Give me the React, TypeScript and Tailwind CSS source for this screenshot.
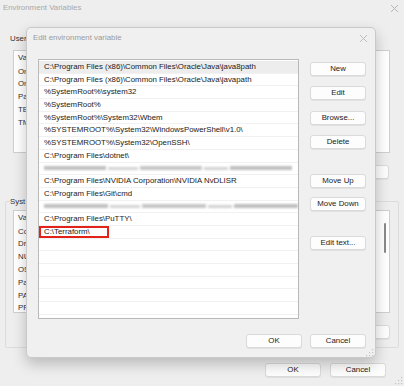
import React from 'react';

const FONT = { fontFamily: '"Liberation Sans", Arial, sans-serif' };

const PATHS: (string | null)[] = [
  'C:\\Program Files (x86)\\Common Files\\Oracle\\Java\\java8path',
  'C:\\Program Files (x86)\\Common Files\\Oracle\\Java\\javapath',
  '%SystemRoot%\\system32',
  '%SystemRoot%',
  '%SystemRoot%\\System32\\Wbem',
  '%SYSTEMROOT%\\System32\\WindowsPowerShell\\v1.0\\',
  '%SYSTEMROOT%\\System32\\OpenSSH\\',
  'C:\\Program Files\\dotnet\\',
  null,
  'C:\\Program Files\\NVIDIA Corporation\\NVIDIA NvDLISR',
  'C:\\Program Files\\Git\\cmd',
  null,
  'C:\\Program Files\\PuTTY\\',
  'C:\\Terraform\\',
  '', '', '', '', '', '',
];

// back window columns are mostly hidden by the dialog, only the first letters show
const USER_VARS = ['On', 'On', 'Pa', 'TE', 'TM'];
const SYS_VARS = ['Co', 'Dr', 'NU', 'OS', 'Pa', 'PA', 'PR'];

const CloseIcon = ({ color = '#b5b5b5' }: { color?: string }) => (
  <svg width="9" height="9" viewBox="0 0 9 9">
    <path d="M1 1L8 8M8 1L1 8" stroke={color} strokeWidth="1" />
  </svg>
);

const Grip = () => (
  <svg width="8" height="8" viewBox="0 0 8 8">
    <rect x="6" y="0" width="1.2" height="1.2" fill="#c4c4c4" />
    <rect x="3" y="3" width="1.2" height="1.2" fill="#c4c4c4" />
    <rect x="6" y="3" width="1.2" height="1.2" fill="#c4c4c4" />
    <rect x="0" y="6" width="1.2" height="1.2" fill="#c4c4c4" />
    <rect x="3" y="6" width="1.2" height="1.2" fill="#c4c4c4" />
    <rect x="6" y="6" width="1.2" height="1.2" fill="#c4c4c4" />
  </svg>
);

const Btn = ({ label, className = '' }: { label?: string; className?: string }) => (
  <div className={`h-[14px] w-[56px] flex items-center justify-center rounded-[3px] bg-[#fdfdfd] border border-[#dadada] shadow-[0_1px_0_rgba(0,0,0,0.06)] text-[7.85px] text-[#1b1b1b] leading-none ${className}`}>
    {label}
  </div>
);

const Blur = ({ w }: { w: number }) => (
  <div className="flex items-center gap-[2px] blur-[1px]" style={{ width: w }}>
    <div className="h-[4px] flex-1 bg-[#c0c0c0]" />
    <div className="h-[3px] w-[30px] bg-[#d4d4d4]" />
    <div className="h-[4px] flex-1 bg-[#c6c6c6]" />
    <div className="h-[3px] w-[24px] bg-[#d2d2d2]" />
    <div className="h-[4px] flex-1 bg-[#bfbfbf]" />
  </div>
);

const BackList = ({ rows }: { rows: string[] }) => (
  <div className="ml-[3px] h-[103px] bg-white border border-[#cfcfcf] overflow-hidden">
    <div className="h-[14px] flex items-center pl-[4px] text-[7.85px] text-[#333]">Va</div>
    {rows.map((r, i) => (
      <div key={i} className="h-[12.8px] flex items-center pl-[4px] text-[7.85px] text-[#333]">{r}</div>
    ))}
  </div>
);

const EditDialog = () => (
  <div className="absolute left-[26px] top-[27px] w-[350px] h-[331px] bg-[#f0f0f0] border border-[#c9c9c9] rounded-[5px] shadow-[0_6px_14px_rgba(0,0,0,0.22)] flex flex-col">
    <div className="h-[18px] mt-[1px] flex items-center justify-between pl-[6px] pr-[7px]">
      <span className="text-[7.85px] text-[#9b9b9b]">Edit environment variable</span>
      <CloseIcon color="#bdbdbd" />
    </div>
    <div className="flex mt-[12px] pl-[11px] gap-[11px]">
      <div className="w-[261px] h-[260px] bg-white border border-[#b9b9b9] flex flex-col">
        <div className="h-[1px]" />
        {PATHS.map((p, i) => (
          <div
            key={i}
            className={`relative h-[12.7px] shrink-0 flex items-center pl-[5px] border-b border-[#f1f1f1] text-[7.85px] text-[#1a1a1a] whitespace-nowrap ${i === 0 ? 'bg-[#ededed]' : ''}`}
          >
            {p === null ? <Blur w={i === 8 ? 248 : 255} /> : p}
            {i === 13 && <div className="absolute left-0 top-[0.5px] w-[70px] h-[12px] border-2 border-[#e2231a]" />}
          </div>
        ))}
      </div>
      <div className="flex flex-col">
        <Btn label="New" className="mt-[3px]" />
        <Btn label="Edit" className="mt-[10px]" />
        <Btn label="Browse..." className="mt-[11px]" />
        <Btn label="Delete" className="mt-[10px]" />
        <Btn label="Move Up" className="mt-[25px]" />
        <Btn label="Move Down" className="mt-[9px]" />
        <Btn label="Edit text..." className="mt-[25px]" />
      </div>
    </div>
    <div className="flex justify-end gap-[8px] pr-[9px] mt-[15px]">
      <Btn label="OK" />
      <Btn label="Cancel" />
    </div>
    <div className="flex justify-end pr-[1px] mt-[1px]">
      <Grip />
    </div>
  </div>
);

export default function App() {
  return (
    <div className="relative w-[404px] h-[386px] overflow-hidden bg-[#eeeeee]" style={FONT}>
      <div className="h-[16px] flex items-center justify-between pl-[3px] pr-[5px]">
        <span className="text-[7.85px] text-[#a9a9a9]">Environment Variables</span>
        <CloseIcon />
      </div>
      <div className="pl-[10px] pr-[14px]">
        <div className="mt-[18px] h-[10px] flex items-center text-[7.85px] text-[#333]">User</div>
        <div className="mt-[6px]">
          <BackList rows={USER_VARS} />
        </div>
        <div className="flex justify-end gap-[9px] mt-[12px]">
          <Btn />
          <Btn />
          <Btn className="mr-[1px]" />
        </div>
      </div>
      <div className="mx-[5px] mt-[22px] border border-[#dcdcdc] h-[147px] rounded-[2px] pl-[4px] pr-[8px]">
        <div className="-mt-[5px] h-[10px] flex items-center text-[7.85px] text-[#333] bg-[#eeeeee] w-fit pr-[2px]">Syst</div>
        <div className="relative mt-[3px]">
          <BackList rows={SYS_VARS} />
          <div className="absolute right-[4px] top-[13px] w-[2px] h-[30px] bg-[#8a8a8a] rounded-full" />
        </div>
        <div className="flex justify-end gap-[9px] mt-[12px]">
          <Btn />
          <Btn />
          <Btn />
        </div>
      </div>
      <div className="flex justify-end gap-[9px] pr-[18px] mt-[15px]">
        <Btn label="OK" className="w-[54px] bg-[#f7f7f7]" />
        <Btn label="Cancel" />
      </div>
      <div className="absolute right-[1px] bottom-[1px]">
        <Grip />
      </div>
      <EditDialog />
    </div>
  );
}
